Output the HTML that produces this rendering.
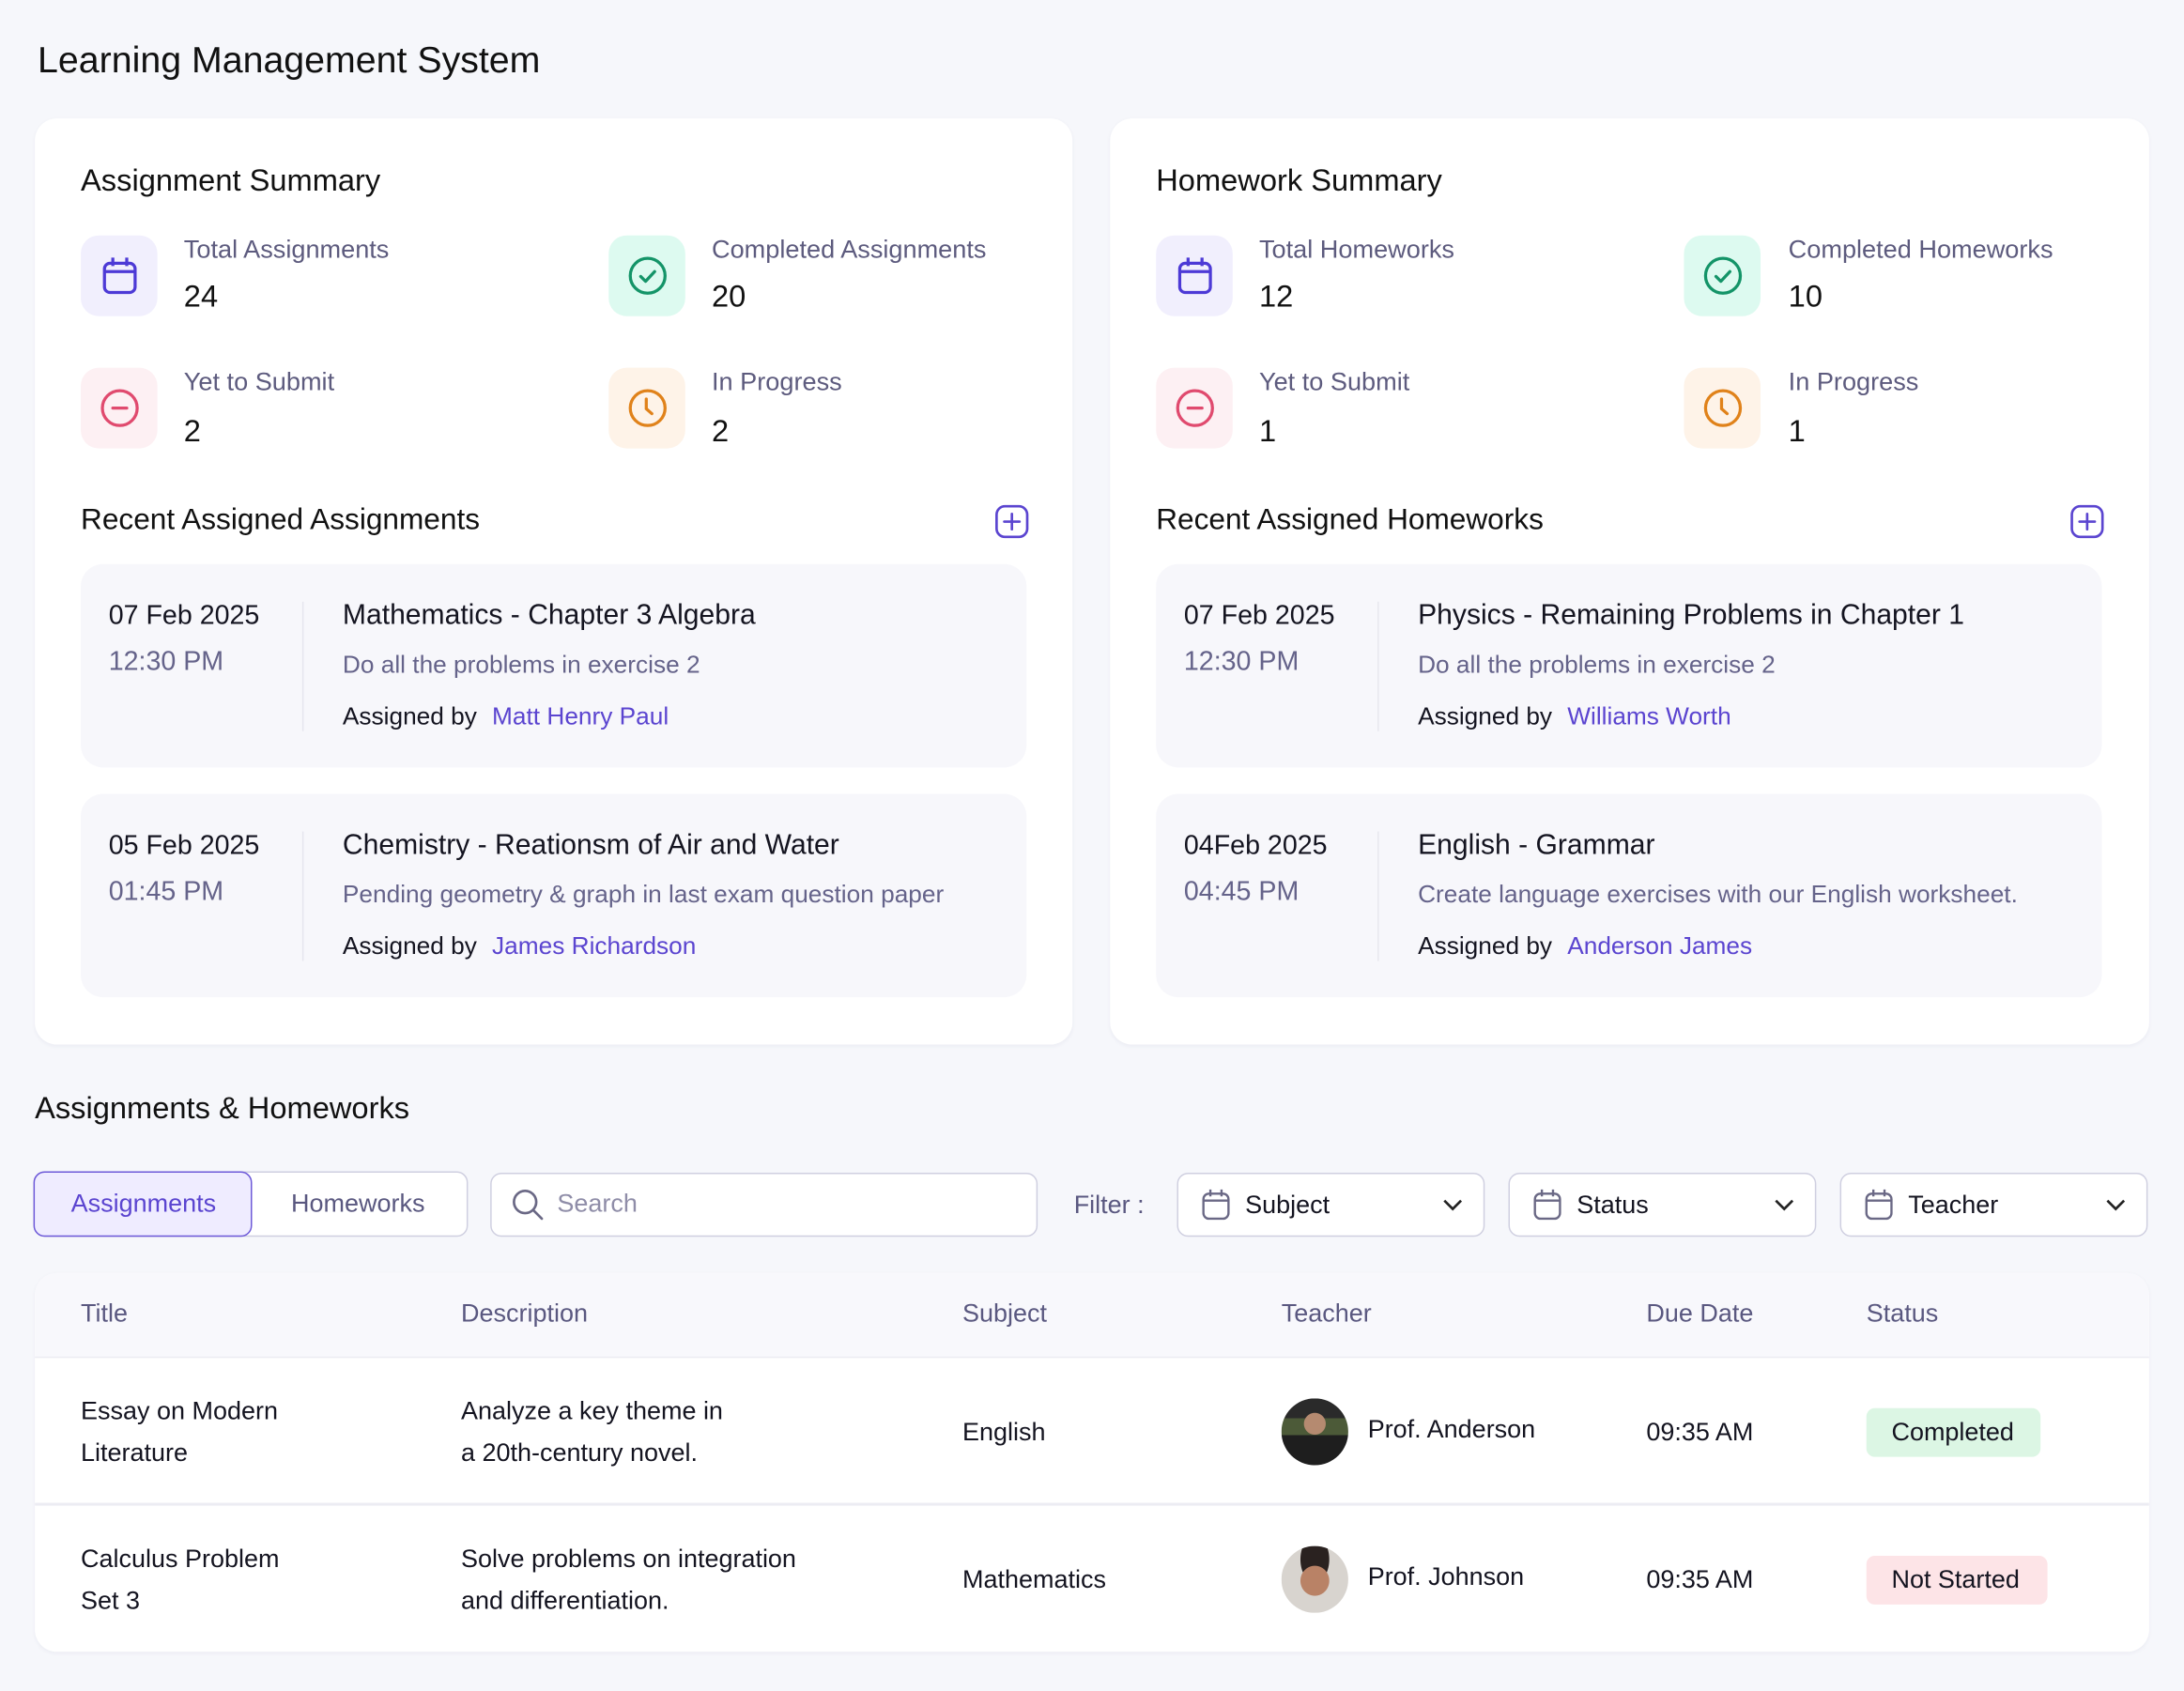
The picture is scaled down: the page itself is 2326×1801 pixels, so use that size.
<!DOCTYPE html>
<html><head><meta charset="utf-8">
<style>
*{box-sizing:border-box;margin:0;padding:0}
html,body{width:2326px;height:1800px;overflow:hidden;background:#f6f7fb}
#w{position:absolute;left:0;top:0;width:1568px;height:1214px;transform:scale(1.4834);transform-origin:0 0;font-family:"Liberation Sans",sans-serif;color:#1b1b2b}
.a{position:absolute;white-space:nowrap;line-height:1}
.card{position:absolute;background:#fff;border-radius:16px;box-shadow:0 1px 3px rgba(40,40,90,.05)}
.ib{position:absolute;width:55px;height:58px;border-radius:13px;display:flex;align-items:center;justify-content:center}
.lab{font-size:18.3px;color:#5d5b7e}
.val{font-size:22px;color:#111}
.h2{font-size:22px;color:#111}
.item{position:absolute;background:#f7f7fb;border-radius:16px;width:679px;height:146px}
.item .d{left:20px;top:28px;font-size:19.3px;color:#141420}
.item .tm{left:20px;top:61px;font-size:19.3px;color:#65638a}
.item .div{position:absolute;left:159px;top:27px;width:1px;height:93px;background:#e6e6ee}
.item .tt{left:188px;top:27px;font-size:20.3px;color:#141420}
.item .ds{left:188px;top:64px;font-size:17.7px;color:#65638a}
.item .by{left:188px;top:101px;font-size:17.7px;color:#141420}
.item .by span{color:#5b45d0;margin-left:6px}
.sel{position:absolute;top:842px;height:46px;width:221px;background:#fff;border:1.5px solid #cfcfe0;border-radius:8px}
.sel .a{left:48px;top:13px;font-size:18.2px;color:#141420}
.th{top:934px;font-size:18.2px;color:#5a5880}
.td{font-size:18.2px;color:#141420}
</style></head><body><div id="w">
<div class="a" style="left:27px;top:30px;font-size:26.5px;color:#111">Learning Management System</div>

<div class="card" style="left:25px;top:85px;width:745px;height:665px"></div>
<div class="card" style="left:797px;top:85px;width:746px;height:665px"></div>

<div class="a h2" style="left:58px;top:119px">Assignment Summary</div>
<div class="ib" style="left:58px;top:169px;background:#f1effd"><svg width="28" height="30" viewBox="0 0 28 30" fill="none" stroke="#4d3ad6" stroke-width="2.2"><rect x="3" y="6" width="22" height="21" rx="4"/><path d="M3 12h22M9 2v6M19 2v6"/></svg></div>
<div class="a lab" style="left:132px;top:170px">Total Assignments</div>
<div class="a val" style="left:132px;top:202px">24</div>
<div class="ib" style="left:437px;top:169px;background:#ddfaf0"><svg width="30" height="30" viewBox="0 0 30 30" fill="none" stroke="#149468" stroke-width="2.2"><circle cx="15" cy="15" r="12.5"/><path d="M10 15.5l3.5 3.5 6.5-7" stroke-linecap="round" stroke-linejoin="round"/></svg></div>
<div class="a lab" style="left:511px;top:170px">Completed Assignments</div>
<div class="a val" style="left:511px;top:202px">20</div>
<div class="ib" style="left:58px;top:264px;background:#fdf0f3"><svg width="30" height="30" viewBox="0 0 30 30" fill="none" stroke="#e04a6e" stroke-width="2.2"><circle cx="15" cy="15" r="12.5"/><path d="M10 15h10" stroke-linecap="round"/></svg></div>
<div class="a lab" style="left:132px;top:265px">Yet to Submit</div>
<div class="a val" style="left:132px;top:299px">2</div>
<div class="ib" style="left:437px;top:264px;background:#fef3e8"><svg width="30" height="30" viewBox="0 0 30 30" fill="none" stroke="#e0821a" stroke-width="2.2"><circle cx="15" cy="15" r="12.5"/><path d="M14 8.5v7l4 3.5" stroke-linecap="round"/></svg></div>
<div class="a lab" style="left:511px;top:265px">In Progress</div>
<div class="a val" style="left:511px;top:299px">2</div>

<div class="a h2" style="left:58px;top:363px;font-size:21.3px">Recent Assigned Assignments</div>
<svg style="position:absolute;left:714px;top:362px" width="25" height="25" viewBox="0 0 25 25" fill="none" stroke="#5b45d0" stroke-width="1.8"><rect x="1.5" y="1.5" width="22" height="22" rx="6"/><path d="M12.5 7v11M7 12.5h11" stroke-linecap="round"/></svg>

<div class="item" style="left:58px;top:405px">
<div class="a d">07 Feb 2025</div><div class="a tm">12:30 PM</div><div class="div"></div>
<div class="a tt">Mathematics - Chapter 3 Algebra</div>
<div class="a ds">Do all the problems in exercise 2</div>
<div class="a by">Assigned by <span>Matt Henry Paul</span></div></div>
<div class="item" style="left:58px;top:570px">
<div class="a d">05 Feb 2025</div><div class="a tm">01:45 PM</div><div class="div"></div>
<div class="a tt">Chemistry - Reationsm of Air and Water</div>
<div class="a ds">Pending geometry &amp; graph in last exam question paper</div>
<div class="a by">Assigned by <span>James Richardson</span></div></div>

<div class="a h2" style="left:830px;top:119px">Homework Summary</div>
<div class="ib" style="left:830px;top:169px;background:#f1effd"><svg width="28" height="30" viewBox="0 0 28 30" fill="none" stroke="#4d3ad6" stroke-width="2.2"><rect x="3" y="6" width="22" height="21" rx="4"/><path d="M3 12h22M9 2v6M19 2v6"/></svg></div>
<div class="a lab" style="left:904px;top:170px">Total Homeworks</div>
<div class="a val" style="left:904px;top:202px">12</div>
<div class="ib" style="left:1209px;top:169px;background:#ddfaf0"><svg width="30" height="30" viewBox="0 0 30 30" fill="none" stroke="#149468" stroke-width="2.2"><circle cx="15" cy="15" r="12.5"/><path d="M10 15.5l3.5 3.5 6.5-7" stroke-linecap="round" stroke-linejoin="round"/></svg></div>
<div class="a lab" style="left:1284px;top:170px">Completed Homeworks</div>
<div class="a val" style="left:1284px;top:202px">10</div>
<div class="ib" style="left:830px;top:264px;background:#fdf0f3"><svg width="30" height="30" viewBox="0 0 30 30" fill="none" stroke="#e04a6e" stroke-width="2.2"><circle cx="15" cy="15" r="12.5"/><path d="M10 15h10" stroke-linecap="round"/></svg></div>
<div class="a lab" style="left:904px;top:265px">Yet to Submit</div>
<div class="a val" style="left:904px;top:299px">1</div>
<div class="ib" style="left:1209px;top:264px;background:#fef3e8"><svg width="30" height="30" viewBox="0 0 30 30" fill="none" stroke="#e0821a" stroke-width="2.2"><circle cx="15" cy="15" r="12.5"/><path d="M14 8.5v7l4 3.5" stroke-linecap="round"/></svg></div>
<div class="a lab" style="left:1284px;top:265px">In Progress</div>
<div class="a val" style="left:1284px;top:299px">1</div>

<div class="a h2" style="left:830px;top:363px;font-size:21.3px">Recent Assigned Homeworks</div>
<svg style="position:absolute;left:1486px;top:362px" width="25" height="25" viewBox="0 0 25 25" fill="none" stroke="#5b45d0" stroke-width="1.8"><rect x="1.5" y="1.5" width="22" height="22" rx="6"/><path d="M12.5 7v11M7 12.5h11" stroke-linecap="round"/></svg>

<div class="item" style="left:830px;top:405px">
<div class="a d">07 Feb 2025</div><div class="a tm">12:30 PM</div><div class="div"></div>
<div class="a tt">Physics - Remaining Problems in Chapter 1</div>
<div class="a ds">Do all the problems in exercise 2</div>
<div class="a by">Assigned by <span>Williams Worth</span></div></div>
<div class="item" style="left:830px;top:570px">
<div class="a d">04Feb 2025</div><div class="a tm">04:45 PM</div><div class="div"></div>
<div class="a tt">English - Grammar</div>
<div class="a ds">Create language exercises with our English worksheet.</div>
<div class="a by">Assigned by <span>Anderson James</span></div></div>

<div class="a h2" style="left:25px;top:785px">Assignments &amp; Homeworks</div>
<div style="position:absolute;left:24px;top:841px;width:312px;height:47px;background:#fff;border:1.5px solid #cfcfe0;border-radius:8px"></div>
<div style="position:absolute;left:24px;top:841px;width:157px;height:47px;background:#efecff;border:1.5px solid #6c58d8;border-radius:8px"></div>
<div class="a" style="left:51px;top:855px;font-size:18.2px;color:#5b45d0">Assignments</div>
<div class="a" style="left:209px;top:855px;font-size:18.2px;color:#5a5880">Homeworks</div>
<div style="position:absolute;left:352px;top:842px;width:393px;height:46px;background:#fff;border:1.5px solid #cfcfe0;border-radius:8px"></div>
<svg style="position:absolute;left:366px;top:852px" width="26" height="26" viewBox="0 0 26 26" fill="none" stroke="#6a6885" stroke-width="1.8"><circle cx="11" cy="11" r="8"/><path d="M17 17l6 6" stroke-linecap="round"/></svg>
<div class="a" style="left:400px;top:855px;font-size:18.2px;color:#8f8da8">Search</div>
<div class="a" style="left:771px;top:856px;font-size:18.2px;color:#5a5880">Filter :</div>
<div class="sel" style="left:845px"><svg style="position:absolute;left:16px;top:10px" width="22" height="24" viewBox="0 0 22 24" fill="none" stroke="#6a6885" stroke-width="1.6"><rect x="2" y="4" width="18" height="18" rx="4"/><path d="M2 9h18M7 1v5M15 1v5"/></svg><div class="a">Subject</div><svg style="position:absolute;right:14px;top:16px" width="16" height="12" viewBox="0 0 16 12" fill="none" stroke="#222" stroke-width="1.8"><path d="M2 3l6 6 6-6"/></svg></div>
<div class="sel" style="left:1083px"><svg style="position:absolute;left:16px;top:10px" width="22" height="24" viewBox="0 0 22 24" fill="none" stroke="#6a6885" stroke-width="1.6"><rect x="2" y="4" width="18" height="18" rx="4"/><path d="M2 9h18M7 1v5M15 1v5"/></svg><div class="a">Status</div><svg style="position:absolute;right:14px;top:16px" width="16" height="12" viewBox="0 0 16 12" fill="none" stroke="#222" stroke-width="1.8"><path d="M2 3l6 6 6-6"/></svg></div>
<div class="sel" style="left:1321px"><svg style="position:absolute;left:16px;top:10px" width="22" height="24" viewBox="0 0 22 24" fill="none" stroke="#6a6885" stroke-width="1.6"><rect x="2" y="4" width="18" height="18" rx="4"/><path d="M2 9h18M7 1v5M15 1v5"/></svg><div class="a">Teacher</div><svg style="position:absolute;right:14px;top:16px" width="16" height="12" viewBox="0 0 16 12" fill="none" stroke="#222" stroke-width="1.8"><path d="M2 3l6 6 6-6"/></svg></div>

<div class="card" style="left:25px;top:914px;width:1518px;height:272px;overflow:hidden">
<div style="position:absolute;left:0;top:0;width:100%;height:61px;background:#f8f8fc;border-bottom:1.5px solid #ececf3"></div>
<div style="position:absolute;left:0;top:165px;width:100%;height:1.5px;background:#ececf3"></div>
</div>
<div class="a th" style="left:58px">Title</div>
<div class="a th" style="left:331px">Description</div>
<div class="a th" style="left:691px">Subject</div>
<div class="a th" style="left:920px">Teacher</div>
<div class="a th" style="left:1182px">Due Date</div>
<div class="a th" style="left:1340px">Status</div>

<div class="a td" style="left:58px;top:998px;line-height:30px">Essay on Modern<br>Literature</div>
<div class="a td" style="left:331px;top:998px;line-height:30px">Analyze a key theme in<br>a 20th-century novel.</div>
<div class="a td" style="left:691px;top:1019px">English</div>
<div style="position:absolute;left:920px;top:1004px;width:48px;height:48px;border-radius:50%;background:radial-gradient(circle at 50% 38%,#b58a70 0 20%,transparent 21%),linear-gradient(#2a2a2a 0 30%,#4c5a38 30% 55%,#1e1e1e 55%)"></div>
<div class="a td" style="left:982px;top:1017px">Prof. Anderson</div>
<div class="a td" style="left:1182px;top:1019px">09:35 AM</div>
<div style="position:absolute;left:1340px;top:1011px;width:125px;height:35px;border-radius:6px;background:#dcf6e4"></div>
<div class="a td" style="left:1358px;top:1019px">Completed</div>

<div class="a td" style="left:58px;top:1104px;line-height:30px">Calculus Problem<br>Set 3</div>
<div class="a td" style="left:331px;top:1104px;line-height:30px">Solve problems on integration<br>and differentiation.</div>
<div class="a td" style="left:691px;top:1125px">Mathematics</div>
<div style="position:absolute;left:920px;top:1110px;width:48px;height:48px;border-radius:50%;background:radial-gradient(ellipse at 50% 52%,#b98266 0 30%,transparent 31%),radial-gradient(ellipse at 50% 20%,#2a2220 0 30%,transparent 31%),#d8d4cf"></div>
<div class="a td" style="left:982px;top:1123px">Prof. Johnson</div>
<div class="a td" style="left:1182px;top:1125px">09:35 AM</div>
<div style="position:absolute;left:1340px;top:1117px;width:130px;height:35px;border-radius:6px;background:#fde4e7"></div>
<div class="a td" style="left:1358px;top:1125px">Not Started</div>
</div></body></html>
